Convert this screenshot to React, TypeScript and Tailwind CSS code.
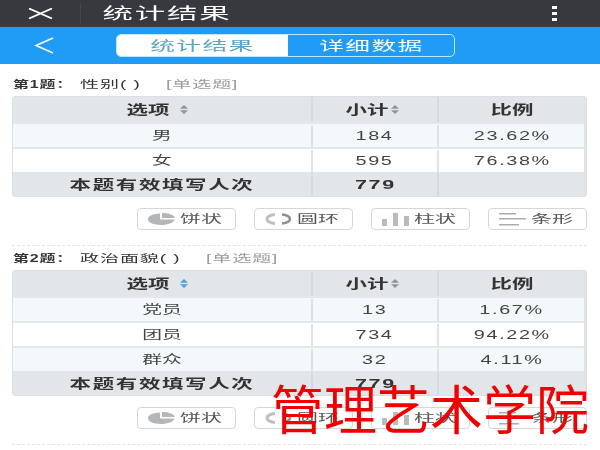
const cjk = "font-['Liberation_Sans','Noto_Sans_CJK_SC',sans-serif]";

function SortIcon({ blue }: { blue?: boolean }) {
  return (
    <svg width="10" height="9" viewBox="0 0 10 9" className="shrink-0">
      <path d="M5 0 L9 3.8 H1 Z" fill={blue ? '#4a9fe0' : '#8f9498'} />
      <path d="M5 9 L9 5.2 H1 Z" fill={blue ? '#4a9fe0' : '#8f9498'} />
    </svg>
  );
}

function PieIcon() {
  return (
    <svg width="27" height="12" viewBox="0 0 27 12">
      <path d="M12 0.5 V6.5 H26.5 C26 9.5 20 12 13 12 C5 12 0 9.5 0 6.3 C0 3 5 0.8 12 0.5 Z" fill="#b4b7b9" />
      <path d="M14 0 C21 0 26 2 27 5 H14 Z" fill="#b4b7b9" />
    </svg>
  );
}

function RingIcon() {
  return (
    <svg width="27" height="12" viewBox="0 0 27 12" fill="none">
      <path d="M10 1.5 C5 2 2 4 2 6 C2 8 5 10 10 10.5" stroke="#bdc0c2" strokeWidth="3" />
      <path d="M17 1.5 C22 2 25 4 25 6 C25 8 22 10 17 10.5" stroke="#8e9194" strokeWidth="2.5" />
    </svg>
  );
}

function BarIcon() {
  return (
    <svg width="27" height="13" viewBox="0 0 27 13">
      <rect x="0" y="6" width="5" height="7" fill="#b8bbbd" />
      <rect x="11" y="0" width="5" height="13" fill="#b8bbbd" />
      <rect x="22" y="3" width="5" height="10" fill="#b8bbbd" />
    </svg>
  );
}

function ListIcon() {
  return (
    <svg width="27" height="13" viewBox="0 0 27 13">
      <rect x="0" y="0" width="17" height="1.5" fill="#a9acae" />
      <rect x="0" y="5" width="27" height="1.5" fill="#a9acae" />
      <rect x="0" y="11" width="20" height="1.5" fill="#a9acae" />
    </svg>
  );
}

function Stretch({ children, wide }: { children: React.ReactNode; wide?: boolean }) {
  return (
    <span className={`inline-block whitespace-nowrap ${wide ? 'scale-x-[1.9]' : 'scale-x-[1.65]'}`}>{children}</span>
  );
}

function StatTable({
  rows,
  total,
  blueSort,
}: {
  rows: string[][];
  total: string;
  blueSort?: boolean;
}) {
  return (
    <div className="mx-3 w-[575px] overflow-hidden rounded-[3px] border border-[#dcdfe2] bg-[#e0e4e7] pr-[2px]">
      <div className="grid h-[25px] grid-cols-[298px_126px_148px] bg-[#e2e6e9] text-[13px] font-bold text-[#333]">
        <div className="flex items-center justify-center gap-[18px]">
          <Stretch>选项</Stretch>
          <SortIcon blue={blueSort} />
        </div>
        <div className="flex items-center justify-center gap-[9px] border-l-2 border-[#d6dadd] pl-[4px]">
          <Stretch>小计</Stretch>
          <SortIcon />
        </div>
        <div className="flex items-center justify-center border-l-2 border-[#d6dadd]">
          <Stretch>比例</Stretch>
        </div>
      </div>
      {rows.map((row, i) => (
        <div
          key={row[0]}
          className={`grid h-[25px] grid-cols-[298px_126px_148px] border-t-2 border-[#e4e8ea] pt-[1px] text-[12px] text-[#444] ${
            i % 2 === 0 ? 'bg-[#f3f9fb]' : 'bg-white'
          }`}
        >
          <div className="flex items-center justify-center">
            <Stretch>{row[0]}</Stretch>
          </div>
          <div className="flex items-center justify-center border-l-2 border-[#dfe3e5] tracking-[1px]">
            <Stretch>{row[1]}</Stretch>
          </div>
          <div className="flex items-center justify-center border-l-2 border-[#dfe3e5] tracking-[1px]">
            <Stretch>{row[2]}</Stretch>
          </div>
        </div>
      ))}
      <div className="grid h-[24px] grid-cols-[298px_126px_148px] bg-[#e2e6e9] pt-[1px] text-[13px] font-bold text-[#333]">
        <div className="flex items-center justify-center tracking-[1px]">
          <Stretch>本题有效填写人次</Stretch>
        </div>
        <div className="flex items-center justify-center border-l-2 border-[#d6dadd] tracking-[1px]">
          <Stretch>{total}</Stretch>
        </div>
        <div className="border-l-2 border-[#d6dadd]" />
      </div>
    </div>
  );
}

function ChartButtons() {
  const items = [
    { label: '饼状', icon: <PieIcon /> },
    { label: '圆环', icon: <RingIcon /> },
    { label: '柱状', icon: <BarIcon /> },
    { label: '条形', icon: <ListIcon /> },
  ];
  return (
    <div className="mr-[13px] mt-[11px] flex justify-end gap-[18px]">
      {items.map((item) => (
        <div
          key={item.label}
          className="flex h-[22px] w-[99px] items-center justify-between rounded-[4px] border border-[#d4d6d8] bg-white pl-[10px] pr-[23px] text-[11px] text-[#555]"
        >
          {item.icon}
          <Stretch wide>{item.label}</Stretch>
        </div>
      ))}
    </div>
  );
}

function Question({
  no,
  title,
  titleWidth,
  rows,
  total,
  blueSort,
}: {
  no: string;
  title: string;
  titleWidth: string;
  rows: string[][];
  total: string;
  blueSort?: boolean;
}) {
  return (
    <section>
      <div className="flex h-[24px] items-center pl-[13px] pt-[1px] text-[10px] text-[#333]">
        <span className="w-[67px] origin-left scale-x-[1.6] whitespace-nowrap font-bold tracking-[0.5px]">第{no}题：</span>
        <span className={`${titleWidth} origin-left scale-x-[1.9] whitespace-nowrap tracking-[0.5px]`}>{title}</span>
        <span className="origin-left scale-x-[1.9] whitespace-nowrap tracking-[0.5px] text-[#9a9a9a]">[单选题]</span>
      </div>
      <StatTable rows={rows} total={total} blueSort={blueSort} />
      <ChartButtons />
      <div className="mx-3 mt-[15px] w-[575px] border-t border-dashed border-[#e4e4e4]" />
    </section>
  );
}

export default function App() {
  return (
    <div className={`relative h-[450px] w-[600px] overflow-hidden bg-white ${cjk}`}>
      <div className="blur-[0.5px]">
        <div className="flex h-[27px] items-center bg-[#37393e] text-white">
          <svg width="25" height="11" viewBox="0 0 25 11" className="ml-[28px]" fill="none" stroke="#fff" strokeWidth="1.8">
            <path d="M1 0.5 L24 10.5 M24 0.5 L1 10.5" />
          </svg>
          <div className="ml-[27px] h-[20px] w-px bg-[#45474c]" />
          <span className="ml-[21px] w-[131px] text-center text-[16px] tracking-[1px]">
            <Stretch wide>统计结果</Stretch>
          </span>
          <svg width="5" height="15" viewBox="0 0 5 15" className="ml-auto mr-[43px]" fill="#fff">
            <rect x="0" y="0" width="5" height="3" />
            <rect x="0" y="6" width="5" height="3" />
            <rect x="0" y="12" width="5" height="3" />
          </svg>
        </div>
        <div className="flex h-[37px] items-center bg-[#209cf6]">
          <svg width="20" height="17" viewBox="0 0 20 17" className="ml-[34px]" fill="none" stroke="#fff" strokeWidth="1.5">
            <path d="M19 1 L2 8.5 L19 16" />
          </svg>
          <div className="ml-[62px] flex h-[23px] w-[339px] overflow-hidden rounded-[5px] border border-[#c5e6fc] text-[13px] tracking-[0.7px]">
            <div className="flex w-[171px] items-center justify-center bg-white text-[#58a5c4]">
              <Stretch wide>统计结果</Stretch>
            </div>
            <div className="flex flex-1 items-center justify-center text-white">
              <Stretch wide>详细数据</Stretch>
            </div>
          </div>
        </div>
        <div className="pt-[8px]">
          <Question
            no="1"
            title="性别( )"
            titleWidth="w-[86px]"
            total="779"
            rows={[
              ['男', '184', '23.62%'],
              ['女', '595', '76.38%'],
            ]}
          />
          <Question
            no="2"
            title="政治面貌( )"
            titleWidth="w-[126px]"
            total="779"
            blueSort
            rows={[
              ['党员', '13', '1.67%'],
              ['团员', '734', '94.22%'],
              ['群众', '32', '4.11%'],
            ]}
          />
        </div>
      </div>
      <div className="absolute left-[271px] top-[375px] whitespace-nowrap text-[53px] leading-[64px] text-[#f00000] [font-family:'Noto_Sans_CJK_SC',sans-serif]">
        管理艺术学院
      </div>
    </div>
  );
}
